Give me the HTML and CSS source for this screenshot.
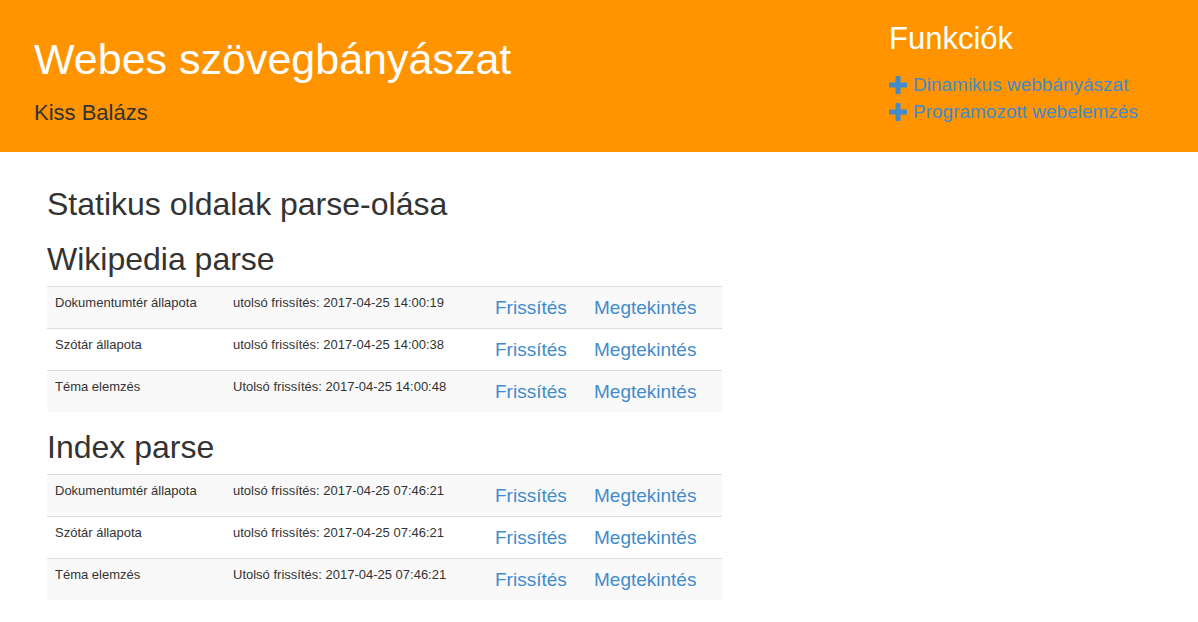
FILE: index.html
```html
<!DOCTYPE html>
<html lang="hu">
<head>
<meta charset="utf-8">
<title>Webes szövegbányászat</title>
<link rel="stylesheet" href="styles.css">
</head>
<body>
<header class="hero">
  <div class="hero-main">
    <h1 class="hero-title">Webes szövegbányászat</h1>
    <p class="hero-author">Kiss Balázs</p>
  </div>
  <nav class="hero-side">
    <h2 class="side-title">Funkciók</h2>
    <ul class="side-list">
      <li><svg class="plus" viewBox="0 0 18 18" width="18" height="18"><path d="M6.5 0h5v6.5H18v5h-6.5V18h-5v-6.5H0v-5h6.5z" fill="#428bca"/></svg><a href="#">Dinamikus webbányászat</a></li>
      <li><svg class="plus" viewBox="0 0 18 18" width="18" height="18"><path d="M6.5 0h5v6.5H18v5h-6.5V18h-5v-6.5H0v-5h6.5z" fill="#428bca"/></svg><a href="#">Programozott webelemzés</a></li>
    </ul>
  </nav>
</header>
<main class="content">
  <h2 class="heading">Statikus oldalak parse-olása</h2>
  <h2 class="heading">Wikipedia parse</h2>
  <table class="status">
    <tr><td class="c1">Dokumentumtér állapota</td><td class="c2">utolsó frissítés: 2017-04-25 14:00:19</td><td class="c3"><a href="#">Frissítés</a></td><td class="c4"><a href="#">Megtekintés</a></td></tr>
    <tr><td class="c1">Szótár állapota</td><td class="c2">utolsó frissítés: 2017-04-25 14:00:38</td><td class="c3"><a href="#">Frissítés</a></td><td class="c4"><a href="#">Megtekintés</a></td></tr>
    <tr><td class="c1">Téma elemzés</td><td class="c2">Utolsó frissítés: 2017-04-25 14:00:48</td><td class="c3"><a href="#">Frissítés</a></td><td class="c4"><a href="#">Megtekintés</a></td></tr>
  </table>
  <h2 class="heading index-heading">Index parse</h2>
  <table class="status">
    <tr><td class="c1">Dokumentumtér állapota</td><td class="c2">utolsó frissítés: 2017-04-25 07:46:21</td><td class="c3"><a href="#">Frissítés</a></td><td class="c4"><a href="#">Megtekintés</a></td></tr>
    <tr><td class="c1">Szótár állapota</td><td class="c2">utolsó frissítés: 2017-04-25 07:46:21</td><td class="c3"><a href="#">Frissítés</a></td><td class="c4"><a href="#">Megtekintés</a></td></tr>
    <tr><td class="c1">Téma elemzés</td><td class="c2">Utolsó frissítés: 2017-04-25 07:46:21</td><td class="c3"><a href="#">Frissítés</a></td><td class="c4"><a href="#">Megtekintés</a></td></tr>
  </table>
</main>
</body>
</html>
```
FILE: styles.css
```css
* { box-sizing: border-box; }
html, body { margin: 0; padding: 0; }
body {
  font-family: "Liberation Sans", Arial, sans-serif;
  color: #333;
  background: #fff;
}
a { color: #428bca; text-decoration: none; }

.hero {
  background: #ff9400;
  height: 152px;
  display: flex;
  justify-content: space-between;
}
.hero-main { padding: 36px 0 0 34px; }
.hero-title {
  margin: 0;
  font-size: 43px;
  line-height: 46px;
  font-weight: normal;
  color: #fff;
}
.hero-author {
  margin: 17px 0 0;
  font-size: 22px;
  line-height: 28px;
  color: #333;
}
.hero-side { width: 309px; padding-top: 22px; }
.side-title {
  margin: 0;
  font-size: 31px;
  line-height: 34px;
  font-weight: normal;
  color: #fff;
}
.side-list {
  list-style: none;
  margin: 15px 0 0;
  padding: 0;
  font-size: 19px;
  line-height: 27px;
}
.side-list li { display: flex; align-items: center; }
.plus { margin-right: 6px; flex: none; }

.content { padding: 0 0 0 47px; width: 722px; }
.heading {
  margin: 20px 0 10px;
  font-size: 32px;
  line-height: 34px;
  font-weight: normal;
  color: #333;
}
.content .heading:first-child { margin-top: 35px; }
.heading + .heading { margin-top: 21px; }
.content .index-heading { margin-top: 18px; }

.status {
  width: 675px;
  border-collapse: collapse;
  border-spacing: 0;
  margin-bottom: 0;
}
.status td {
  border-top: 1px solid #ddd;
  padding: 7px 8px 9px;
  vertical-align: top;
  font-size: 13px;
  line-height: 18px;
}
.status tr:nth-child(odd) { background: #f9f9f9; }
.status .c1 { width: 178px; }
.status .c2 { width: 262px; }
.status .c3 { width: 99px; }
.status .c4 { width: 136px; }
.status .c3, .status .c4 { font-size: 19px; line-height: 25px; padding-top: 8px; padding-bottom: 8px; }
```
